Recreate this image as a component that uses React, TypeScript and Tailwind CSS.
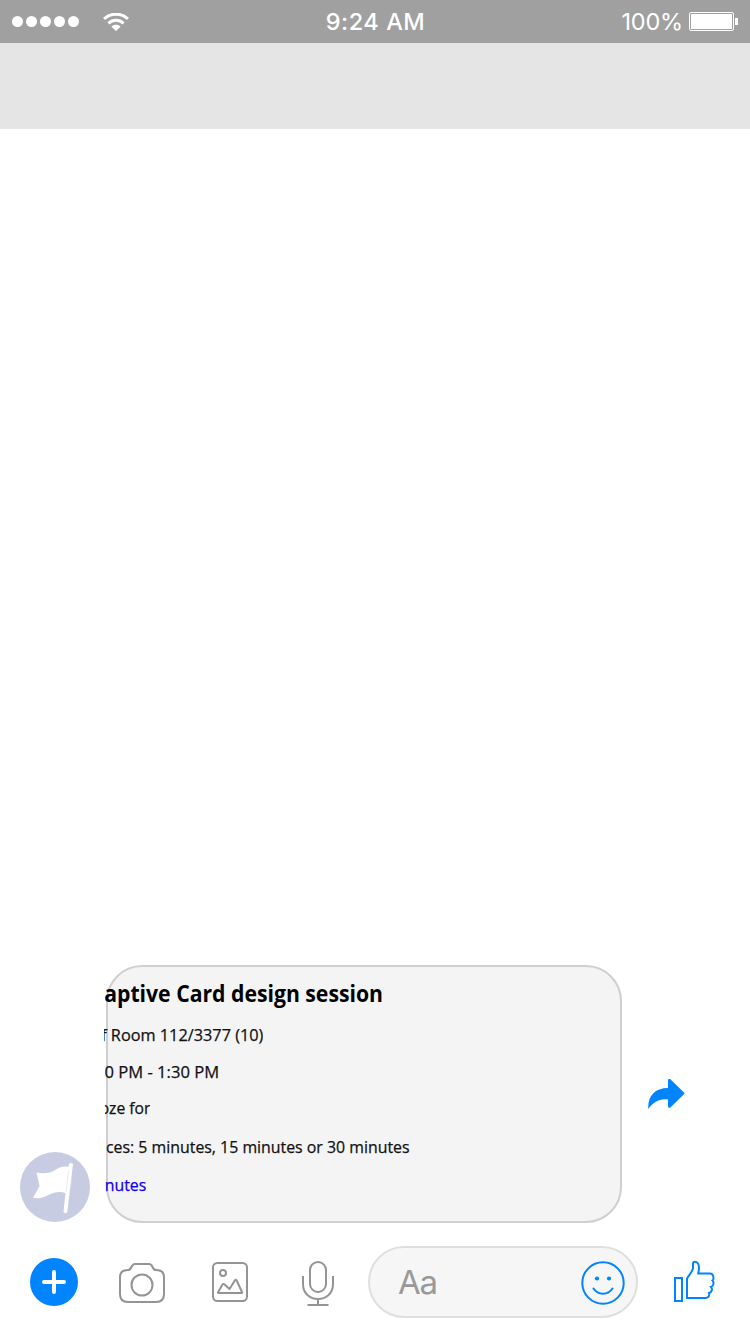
import type { ReactNode } from "react";

function CardLine({ className, children }: { className: string; children: ReactNode }) {
  return (
    <div className={`flex items-center justify-end overflow-hidden whitespace-nowrap ${className}`}>
      {children}
    </div>
  );
}

function StatusBar() {
  return (
    <header className="flex h-[43px] items-center bg-[#a0a0a0] text-white">
      <div className="flex flex-1 items-center pl-3">
        <div className="flex gap-[3px]">
          {[0, 1, 2, 3, 4].map((dot) => (
            <span key={dot} className="size-[11px] rounded-full bg-white" />
          ))}
        </div>
        <svg className="ml-6 h-[18px] w-[26px]" viewBox="0 0 26 18" fill="none" stroke="white">
          <path d="M1 5.800C7.500-.4 18.500-.4 25 5.800" strokeWidth="3" />
          <path d="M5.400 10.300C9.700 6.200 16.300 6.200 20.600 10.300" strokeWidth="3" />
          <path d="M8.400 13.800C11 11.200 15 11.200 17.600 13.800L13 18Z" fill="white" stroke="none" />
        </svg>
      </div>
      <div className="pl-px font-['Inter',sans-serif] text-[23.500px] font-medium tracking-[0.550px]">9:24 AM</div>
      <div className="flex flex-1 items-center justify-end pr-3">
        <span className="font-['Inter',sans-serif] text-[23.500px] tracking-[-0.2px]">100%</span>
        <svg className="ml-[6px] h-[19px] w-[49px]" viewBox="0 0 49 19">
          <rect x=".5" y=".5" width="44" height="18" rx="1.500" fill="none" stroke="white" />
          <rect x="2" y="2" width="41" height="15" rx=".5" fill="white" />
          <rect x="46" y="6" width="3" height="7" fill="white" />
        </svg>
      </div>
    </header>
  );
}

function FlagAvatar() {
  return (
    <svg className="mb-px size-[70px] shrink-0" viewBox="0 0 70 70">
      <circle cx="35" cy="35" r="35" fill="#c7cce3" />
      <path
        d="M16.500 20.500C23 22 30 21.500 36 17.500C40 15 44.500 14 48.200 15L49 12Q51 10 53 12L47.300 60Q45.500 62.500 43.500 60L45.500 41C37 38 31 42 25 44.500C21 46.400 17 46.700 13 45.800L19.500 34Z"
        fill="white"
      />
      <path d="M48.500 19L46 40M51.500 27L50.500 36" stroke="#e0e3f0" strokeWidth=".7" fill="none" />
    </svg>
  );
}

function Message() {
  return (
    <section className="flex h-[258px] pl-5">
      <div className="flex items-end">
        <FlagAvatar />
      </div>
      <div className="ml-4 h-[258px] w-[516px] rounded-[36px] border-2 border-[#cfcfcf] bg-[#f4f4f4] font-['Open_Sans',sans-serif] text-[16.500px] leading-[37.500px] text-[#111] [-webkit-text-stroke:0.25px]">
        <div className="-ml-[3px] pt-[10px]">
          <CardLine className="h-[34px] w-[277.500px] text-[22.500px] font-bold text-black [-webkit-text-stroke:0px]">
            <span className="origin-right scale-x-[0.942]">aptive Card design session</span>
          </CardLine>
          <div className="pt-[4.500px]">
            <CardLine className="-ml-px h-[37.500px] w-[159px] pl-[2px]">
              <span className="origin-right scale-x-[0.987]">f Room 112/3377 (10)</span>
            </CardLine>
            <CardLine className="h-[37.500px] w-[114px]">
              <span className="origin-right scale-x-[1.005]">0 PM - 1:30 PM</span>
            </CardLine>
            <CardLine className="-mt-px h-[38.500px] w-[45px] pb-[1.500px]">
              <span className="origin-right scale-x-[0.95]">oze for</span>
            </CardLine>
            <CardLine className="h-[37.500px] w-[305px]">
              <span className="origin-right scale-x-[0.962]">ces: 5 minutes, 15 minutes or 30 minutes</span>
            </CardLine>
            <CardLine className="h-[37.500px] w-[41px] text-[#0b00f5]">
              <span className="origin-right scale-x-[0.96]">nutes</span>
            </CardLine>
          </div>
        </div>
      </div>
      <div className="ml-[26px] flex items-center">
        <svg className="h-[31px] w-[37px]" viewBox="0 0 37 31" fill="#0084ff">
          <path d="M20 9V1.500Q20-.5 22-.1L36 13.600Q36.600 14.400 36 15.200L22.400 28.600Q20 29.500 20 27.300V20.500C11 19.500 5 23.500 .3 30C-.5 18 6 9 20 9Z" />
        </svg>
      </div>
    </section>
  );
}

function Composer() {
  return (
    <footer className="mt-[23px] flex h-[72px] items-center pl-[30px]">
      <svg className="size-12" viewBox="0 0 48 48">
        <circle cx="24" cy="24" r="24" fill="#0084ff" />
        <path d="M24 14V34M14 24H34" stroke="white" strokeWidth="4" strokeLinecap="round" />
      </svg>
      <svg className="ml-10 h-12 w-12" viewBox="0 0 48 48" fill="none" stroke="#949494" strokeWidth="2">
        <path d="M10 12C14.500 12 12.500 6 17 6H31C35.500 6 33.500 12 38 12C43 12 46 14.500 46 19V36Q46 44 38 44H10Q2 44 2 36V19C2 14.500 5 12 10 12Z" />
        <circle cx="24" cy="27" r="10.500" />
      </svg>
      <svg className="ml-[36px] h-12 w-12" viewBox="0 0 48 48" fill="none" stroke="#949494" strokeWidth="2" strokeLinejoin="round">
        <rect x="11" y="5" width="34" height="38" rx="4.500" />
        <circle cx="21" cy="15" r="3" />
        <path d="M16.500 35H39.500Q40.500 35 40 34L34.500 22.300Q33.800 21.200 33 22.300L27.500 31L22.300 26.300Q21.300 25.500 20.500 26.600L16.200 34Q15.700 35 16.500 35Z" />
      </svg>
      <svg className="ml-[52px] h-12 w-8" viewBox="0 0 32 48" fill="none" stroke="#949494" strokeWidth="2">
        <rect x="8" y="4" width="16" height="30" rx="8" />
        <path d="M1 18V26C1 46 31 46 31 26V18M16 41V47M5.500 47H26.500" />
      </svg>
      <div className="ml-[34px] flex h-[72px] w-[270px] items-center justify-between rounded-full border-2 border-[#dfdfdf] bg-[#f6f6f6] pr-[11px] pl-[28px]">
        <span className="pt-[2px] font-['Inter',sans-serif] text-[33px] tracking-[-1.2px] text-[#999]">Aa</span>
        <svg className="mt-[2px] size-[44px]" viewBox="0 0 44 44" fill="none" stroke="#0084ff" strokeWidth="2">
          <circle cx="22" cy="22" r="20.700" />
          <circle cx="16" cy="17.500" r="2.100" fill="#0084ff" stroke="none" />
          <circle cx="28" cy="17.500" r="2.100" fill="#0084ff" stroke="none" />
          <path d="M12.500 27.500C17 34.500 27 34.500 31.500 27.500" strokeLinecap="round" />
        </svg>
      </div>
      <svg className="ml-9 h-[44px] w-[41px]" viewBox="0 0 41 44" fill="none" stroke="#0084ff" strokeWidth="2">
        <rect x="1" y="18" width="7" height="23" />
        <path d="M13 38V18.500C15 15 19 11 19 8V3.500C19 .8 25 .5 25 8C25 10.500 24.200 12.500 24.200 13.500H36C40 13.500 40 19.500 38.500 20.500C40 22 40 26 37 27C39 29 37.500 32.500 35 33C36 36 34 38 31.500 38Z" />
      </svg>
    </footer>
  );
}

export default function App() {
  return (
    <main className="flex h-[1334px] w-[750px] flex-col overflow-hidden bg-white">
      <StatusBar />
      <div className="h-[86px] bg-[#e5e5e5]" />
      <div className="flex-1" />
      <Message />
      <Composer />
      <div className="h-4" />
    </main>
  );
}
